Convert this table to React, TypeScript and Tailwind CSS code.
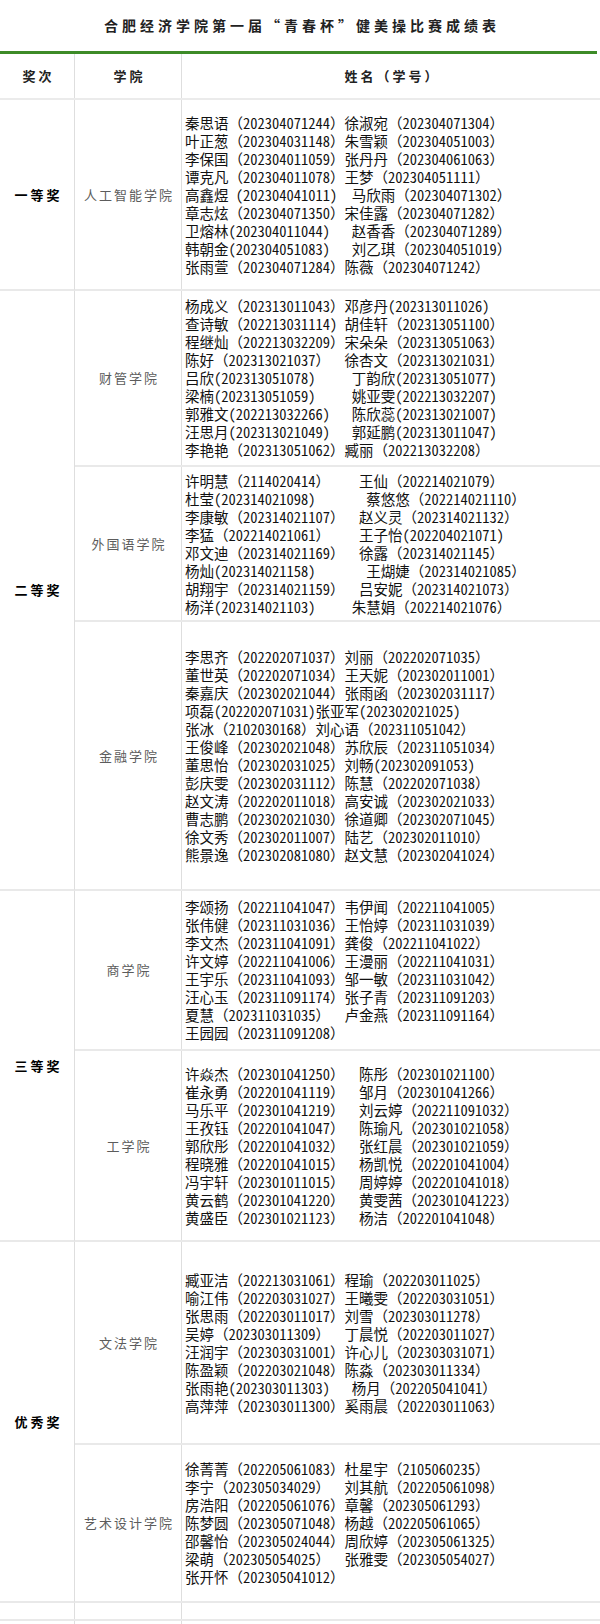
import React from 'react';

type Row = { college: string; h: string; lines: string[] };
type Group = { award: string; rows: Row[] };

// spacing in the name strings assumes SimSun-like metrics: CJK = 1em, ASCII = 0.5em
const groups: Group[] = [
  {
    award: '一等奖',
    rows: [
      {
        college: '人工智能学院',
        h: 'h-[191px]',
        lines: [
          '秦思语（202304071244）徐淑宛（202304071304）',
          '叶正葱（202304031148）朱雪颖（202304051003）',
          '李保国（202304011059）张丹丹（202304061063）',
          '谭克凡（202304011078）王梦（202304051111）',
          '高鑫煜 (202304041011)  马欣雨（202304071302）',
          '章志炫（202304071350）宋佳露（202304071282）',
          '卫熔林(202304011044)   赵香香（202304071289）',
          '韩朝金(202304051083)   刘乙琪（202304051019）',
          '张雨萱（202304071284）陈薇（202304071242）',
        ],
      },
    ],
  },
  {
    award: '二等奖',
    rows: [
      {
        college: '财管学院',
        h: 'h-[176px]',
        lines: [
          '杨成义（202313011043）邓彦丹(202313011026)',
          '查诗敏（202213031114) 胡佳轩（202313051100）',
          '程继灿（202213032209）宋朵朵（202313051063）',
          '陈好（202313021037）  徐杏文（202313021031）',
          '吕欣(202313051078)     丁韵欣(202313051077)',
          '梁楠(202313051059)     姚亚雯(202213032207)',
          '郭雅文(202213032266)   陈欣蕊(202313021007)',
          '汪思月(202313021049)   郭延鹏(202313011047)',
          '李艳艳（202313051062）臧丽（202213032208）',
        ],
      },
      {
        college: '外国语学院',
        h: 'h-[155px]',
        lines: [
          '许明慧（2114020414）    王仙（202214021079）',
          '杜莹(202314021098)       蔡悠悠（202214021110）',
          '李康敏（202314021107）  赵义灵（202314021132）',
          '李猛（202214021061）    王子怡(202204021071)',
          '邓文迪（202314021169）  徐露（202314021145）',
          '杨灿(202314021158)       王煳婕（202314021085）',
          '胡翔宇（202314021159）  吕安妮（202314021073）',
          '杨洋(202314021103)     朱慧娟（202214021076）',
        ],
      },
      {
        college: '金融学院',
        h: 'h-[269px]',
        lines: [
          '李思齐（202202071037）刘丽（202202071035）',
          '董世英（202202071034）王天妮（202302011001）',
          '秦嘉庆（202302021044）张雨函（202302031117）',
          '项磊(202202071031)张亚军(202302021025)',
          '张冰（2102030168）刘心语（202311051042）',
          '王俊峰（202302021048）苏欣辰（202311051034）',
          '董思怡（202302031025）刘畅(202302091053)',
          '彭庆雯（202302031112）陈慧（202202071038）',
          '赵文涛（202202011018）高安诚（202302021033）',
          '曹志鹏（202302021030）徐道卿（202302071045）',
          '徐文秀（202302011007）陆艺（202302011010）',
          '熊景逸（202302081080）赵文慧（202302041024）',
        ],
      },
    ],
  },
  {
    award: '三等奖',
    rows: [
      {
        college: '商学院',
        h: 'h-[160px]',
        lines: [
          '李颂扬（202211041047）韦伊闻（202211041005）',
          '张伟健（202311031036）王怡婷（202311031039）',
          '李文杰（202311041091）龚俊（202211041022）',
          '许文婷（202211041006）王漫丽（202211041031）',
          '王宇乐（202311041093）邹一敏（202311031042）',
          '汪心玉（202311091174）张子青（202311091203）',
          '夏慧（202311031035）  卢金燕（202311091164）',
          '王园园（202311091208）',
        ],
      },
      {
        college: '工学院',
        h: 'h-[191px]',
        lines: [
          '许焱杰（202301041250）  陈彤（202301021100）',
          '崔永勇（202201041119）  邹月（202301041266）',
          '马乐平（202301041219）  刘云婷（202211091032）',
          '王孜钰（202201041047）  陈瑜凡（202301021058）',
          '郭欣彤（202201041032）  张红晨（202301021059）',
          '程晓雅（202201041015）  杨凯悦（202201041004）',
          '冯宇轩（202301011015）  周婷婷（202201041018）',
          '黄云鹤（202301041220）  黄雯茜（202301041223）',
          '黄盛臣（202301021123）  杨洁（202201041048）',
        ],
      },
    ],
  },
  {
    award: '优秀奖',
    rows: [
      {
        college: '文法学院',
        h: 'h-[203px]',
        lines: [
          '臧亚洁（202213031061）程瑜（202203011025）',
          '喻江伟（202203031027）王曦雯（202203031051）',
          '张思雨（202203011017）刘雪（202303011278）',
          '吴婷（202303011309）  丁晨悦（202203011027）',
          '汪润宇（202303031001）许心儿（202303031071）',
          '陈盈颖（202203021048）陈淼（202303011334）',
          '张雨艳(202303011303)   杨月（202205041041）',
          '高萍萍（202303011300）奚雨晨（202203011063）',
        ],
      },
      {
        college: '艺术设计学院',
        h: 'h-[158px]',
        lines: [
          '徐菁菁（202205061083）杜星宇（2105060235）',
          '李宁（202305034029）  刘其航（202205061098）',
          '房浩阳（202205061076）章馨（202305061293）',
          '陈梦圆（202305071048）杨越（202205061065）',
          '邵馨怡（202305024044）周欣婷（202305061325）',
          '梁萌（202305054025）  张雅雯（202305054027）',
          '张开怀（202305041012）',
        ],
      },
    ],
  },
];

const EmptyRow: React.FC<{ h: string }> = ({ h }) => (
  <div className={`flex border-b-2 border-[#e9e9e9] ${h}`}>
    <div className="w-[75px] border-r border-[#dedede]" />
    <div className="w-[107px] border-r border-[#dedede]" />
    <div className="flex-1" />
  </div>
);

export default function App() {
  return (
    <div className="w-[600px] bg-white font-['Noto_Sans_CJK_SC',sans-serif] text-[#111]">
      <div className="flex h-[51px] items-center justify-center">
        <h1 className="pl-[4px] text-[14px] font-bold tracking-[4px] text-[#222]">
          合肥经济学院第一届“青春杯”健美操比赛成绩表
        </h1>
      </div>
      <div className="mr-[3px] h-[3px] bg-[#3d8b27]" />

      <div className="flex h-[46px] border-b-2 border-[#ebebeb] text-[13px] font-bold tracking-[3px] text-[#222]">
        <div className="flex w-[75px] items-center justify-center border-r border-[#dedede] pl-[3px]">奖次</div>
        <div className="flex w-[107px] items-center justify-center border-r border-[#dedede] pl-[3px]">学院</div>
        <div className="flex flex-1 items-center justify-center pl-[3px]">姓名（学号）</div>
      </div>

      {groups.map((g) => (
        <div key={g.award} className="flex">
          <div className="flex w-[75px] items-center justify-center border-r border-b-2 border-r-[#dedede] border-b-[#e9e9e9] pl-[3px] text-[13px] font-bold tracking-[3px] text-black">
            {g.award}
          </div>
          <div className="flex flex-1 flex-col">
            {g.rows.map((r) => (
              <div key={r.college} className={`flex border-b-2 border-[#e9e9e9] ${r.h}`}>
                <div className="flex w-[107px] items-center justify-center border-r border-[#dedede] pl-[2px] text-[13px] tracking-[2px] text-[#5c5c5c]">
                  {r.college}
                </div>
                <div className="flex flex-1 flex-col justify-center pl-[3px] font-['Noto_Sans_Mono_CJK_SC','Noto_Sans_CJK_SC',monospace] text-[14.5px] leading-[18px]">
                  {r.lines.map((l, i) => (
                    <div key={i} className="whitespace-pre">
                      {l}
                    </div>
                  ))}
                </div>
              </div>
            ))}
          </div>
        </div>
      ))}

      <EmptyRow h="h-[18px]" />
      <EmptyRow h="h-[20px]" />
    </div>
  );
}
